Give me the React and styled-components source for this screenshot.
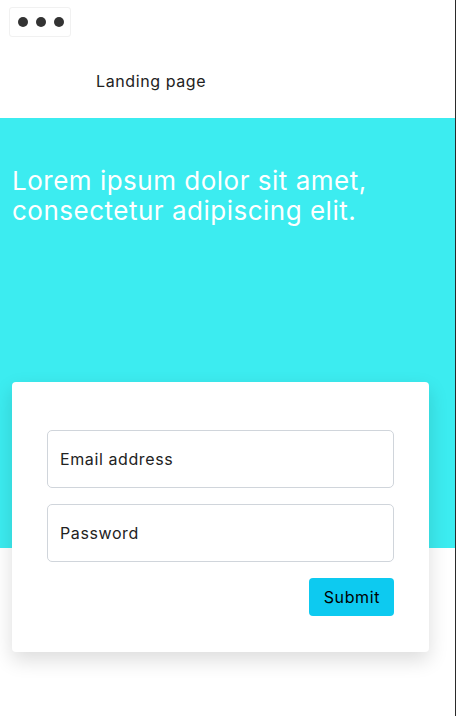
import React from "react";
import styled, { createGlobalStyle } from "styled-components";

const GlobalStyle = createGlobalStyle`
  html, body {
    margin: 0;
    padding: 0;
    background: #fff;
  }
  body {
    font-family: "Inter", "Noto Sans", sans-serif;
    letter-spacing: 0.6px;
  }
  * {
    box-sizing: border-box;
  }
`;

const App = () => {
  return (
    <Page>
      <GlobalStyle />
      <Header>
        <MenuButton aria-label="menu">
          <Dot />
          <Dot />
          <Dot />
        </MenuButton>
        <Title>Landing page</Title>
      </Header>
      <Hero>
        <HeroText>
          Lorem ipsum dolor sit amet,
          <br />
          consectetur adipiscing elit.
        </HeroText>
      </Hero>
      <CardWrap>
        <Card>
          <Field placeholder="Email address" type="email" />
          <Field placeholder="Password" type="password" />
          <Actions>
            <SubmitButton>Submit</SubmitButton>
          </Actions>
        </Card>
      </CardWrap>
    </Page>
  );
};

const Page = styled.div`
  width: 456px;
  min-height: 716px;
  border-right: 1px solid #2b2b2b;
`;

const Header = styled.header`
  height: 118px;
  padding: 7px 0 0 9px;
`;

const MenuButton = styled.button`
  display: flex;
  align-items: center;
  gap: 8px;
  width: 62px;
  height: 30px;
  padding: 0 0 0 8px;
  background: #fff;
  border: 1px solid #f1f1f1;
  border-radius: 3px;
`;

const Dot = styled.span`
  width: 10px;
  height: 10px;
  border-radius: 50%;
  background: #333;
`;

const Title = styled.div`
  margin: 33px 0 0 87px;
  font-size: 16px;
  color: #222;
  line-height: 22px;
`;

const Hero = styled.section`
  height: 430px;
  background: #3cecf0;
  padding: 48px 12px 0;
`;

const HeroText = styled.h1`
  margin: 0;
  font-size: 26px;
  font-weight: 400;
  line-height: 30px;
  letter-spacing: 0.5px;
  color: #fff;
`;

const CardWrap = styled.div`
  margin-top: -166px;
  padding: 0 26px 60px 12px;
`;

const Card = styled.form`
  display: flex;
  flex-direction: column;
  gap: 16px;
  padding: 48px 35px 36px;
  background: #fff;
  border-radius: 4px;
  box-shadow: 0 8px 20px rgba(0, 0, 0, 0.14);
`;

const Field = styled.input`
  height: 58px;
  width: 100%;
  padding: 0 12px;
  font: inherit;
  font-size: 16px;
  letter-spacing: 0.6px;
  color: #222;
  border: 1px solid #d0d5db;
  border-radius: 5px;
  outline: none;

  &::placeholder {
    color: #222;
  }
`;

const Actions = styled.div`
  display: flex;
  justify-content: flex-end;
`;

const SubmitButton = styled.button`
  height: 38px;
  padding: 0 14px 0 15px;
  font: inherit;
  font-size: 16px;
  letter-spacing: 0.6px;
  color: #000;
  background: #0dcaf0;
  border: none;
  border-radius: 4px;
`;

export default App;
